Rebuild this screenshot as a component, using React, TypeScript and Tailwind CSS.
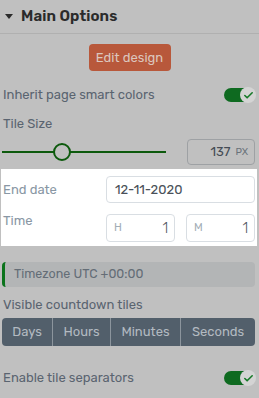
import { Check } from 'lucide-react';

function Toggle() {
  return (
    <div className="relative w-[32px] h-[16px] flex items-center">
      <div className="w-[30px] h-[14px] rounded-full bg-[#0e6a20]" />
      <div className="absolute right-0 top-0 w-[16px] h-[16px] rounded-full bg-[#d4d4d4] flex items-center justify-center">
        <Check className="w-[11px] h-[11px] text-[#167a28]" strokeWidth={3.5} />
      </div>
    </div>
  );
}

export default function App() {
  const font = { fontFamily: 'Rubik, Inter, "Noto Sans", sans-serif' };
  return (
    <div className="w-[259px] h-[398px] bg-[#c0c0c0] overflow-hidden" style={font}>
      {/* Header */}
      <div className="h-[34px] flex items-center pl-[5px] gap-[8px] border-b border-[#b0b0b0]">
        <svg width="8" height="6" viewBox="0 0 8 6">
          <path d="M0 0 L8 0 L4 5 Z" fill="#2b2b2b" />
        </svg>
        <span className="text-[15px] font-semibold text-[#2b2b2b] tracking-[0.1px]">Main Options</span>
      </div>

      {/* Edit design */}
      <div className="flex justify-center mt-[10px]">
        <button className="w-[82px] h-[27px] rounded-[4px] bg-[#b8583b] text-[#dcc6be] text-[13px]">
          Edit design
        </button>
      </div>

      {/* Inherit */}
      <div className="flex items-center justify-between pl-[3px] pr-[3px] mt-[16px] h-[16px]">
        <span className="text-[13px] text-[#5a6470]">Inherit page smart colors</span>
        <Toggle />
      </div>

      {/* Tile Size */}
      <div className="pl-[3px] mt-[13px] text-[13px] text-[#5a6470] leading-[16px]">Tile Size</div>
      <div className="flex items-center justify-between pl-[2px] pr-[4px] mt-[7px]">
        <div className="relative w-[164px] h-[26px] flex items-center">
          <div className="w-full h-[2px] bg-[#0d5a0d]" />
          <div className="absolute left-[51px] top-[4px] w-[18px] h-[18px] rounded-full border-2 border-[#0d5a0d] bg-[#c0c0c0]" />
        </div>
        <div className="w-[68px] h-[26px] rounded-[4px] border border-[#9ea1a4] flex items-center justify-end pr-[6px] gap-[5px]">
          <span className="text-[13px] text-[#454c55]">137</span>
          <span className="text-[10px] text-[#6a727a]">PX</span>
        </div>
      </div>

      {/* Highlighted region */}
      <div className="bg-white mt-[4px] ml-[1px] mr-[2px] h-[77px] pt-[7px] pr-[2px]">
        <div className="flex items-center">
          <span className="w-[105px] pl-[2px] text-[13px] text-[#8997a4]">End date</span>
          <div className="flex-1 h-[27px] rounded-[4px] border border-[#d9dee3] flex items-center pl-[8px] text-[13px] text-[#4a5159]">
            12-11-2020
          </div>
        </div>
        <div className="flex items-start mt-[11px]">
          <span className="w-[105px] pl-[2px] text-[13px] text-[#8997a4] leading-[14px]">Time</span>
          <div className="flex-1 flex gap-[11px]">
            <div className="flex-1 h-[28px] rounded-[4px] border border-[#d9dee3] flex items-center justify-between pl-[7px] pr-[6px]">
              <span className="text-[11px] text-[#a2adb6]">H</span>
              <span className="text-[14px] font-light text-[#4a5159]">1</span>
            </div>
            <div className="flex-1 h-[28px] rounded-[4px] border border-[#d9dee3] flex items-center justify-between pl-[7px] pr-[6px]">
              <span className="text-[11px] text-[#a2adb6]">M</span>
              <span className="text-[14px] font-light text-[#4a5159]">1</span>
            </div>
          </div>
        </div>
      </div>

      {/* Timezone */}
      <div className="mt-[16px] ml-[2px] mr-[4px] h-[25px] rounded-[4px] bg-[#b3b5b6] border-l-[3px] border-[#0b731c] flex items-center pl-[9px] text-[12.5px] text-[#646d76]">
        Timezone UTC +00:00
      </div>

      {/* Visible countdown tiles */}
      <div className="pl-[3px] mt-[10px] text-[13px] text-[#5a6470] leading-[16px]">Visible countdown tiles</div>
      <div className="mt-[5px] ml-[2px] mr-[4px] h-[28px] rounded-[4px] bg-[#525f6b] flex text-[13px] text-[#b3bac1]">
        <div className="w-[51px] flex items-center justify-center border-r border-[#8c959d]">Days</div>
        <div className="w-[58px] flex items-center justify-center border-r border-[#8c959d]">Hours</div>
        <div className="w-[70px] flex items-center justify-center border-r border-[#8c959d]">Minutes</div>
        <div className="flex-1 flex items-center justify-center">Seconds</div>
      </div>

      {/* Enable tile separators */}
      <div className="flex items-center justify-between pl-[3px] pr-[3px] mt-[24px] h-[16px]">
        <span className="text-[13px] text-[#5a6470]">Enable tile separators</span>
        <Toggle />
      </div>
    </div>
  );
}
